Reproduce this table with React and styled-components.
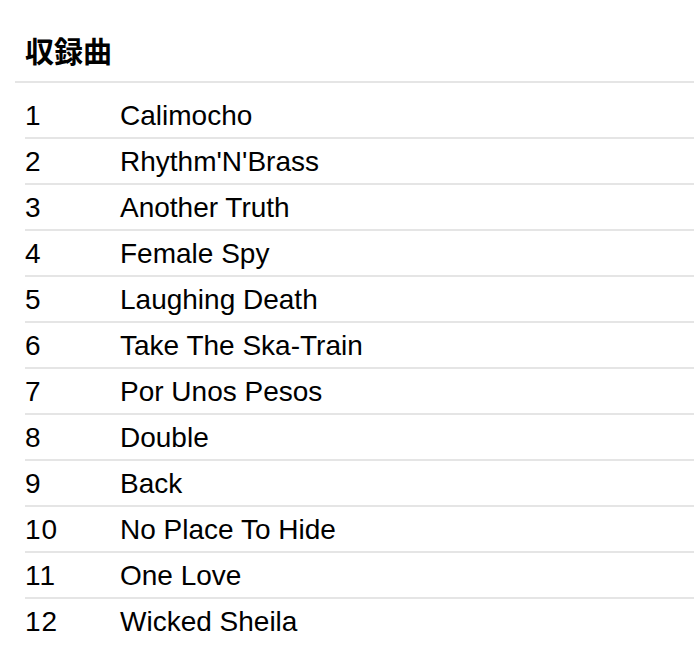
import React from "react";
import styled, { createGlobalStyle } from "styled-components";

const GlobalStyle = createGlobalStyle`
  html, body {
    margin: 0;
    padding: 0;
    background: #ffffff;
  }
  body {
    font-family: "Liberation Sans", "Noto Sans CJK JP", Arial, sans-serif;
    color: #000000;
  }
`;

const Section = styled.section`
  padding-left: 15px;
`;

const Heading = styled.h2`
  margin: 0;
  padding: 34px 0 15px 10px;
  font-size: 29px;
  line-height: 32px;
  font-weight: 700;
  font-family: "Noto Sans CJK JP", "Liberation Sans", sans-serif;
  border-bottom: 2px solid #e5e5e5;
`;

const TrackList = styled.ol`
  list-style: none;
  margin: 10px 0 0 10px;
  padding: 0;
`;

const TrackRow = styled.li`
  display: grid;
  grid-template-columns: 95px 1fr;
  padding: 7px 0 5px;
  font-size: 28px;
  line-height: 32px;
  border-bottom: 2px solid #e5e5e5;
  &:last-child {
    border-bottom: none;
  }
`;

const TrackNo = styled.span`
  letter-spacing: 1px;
`;
const TrackTitle = styled.span``;

const tracks = [
  "Calimocho",
  "Rhythm'N'Brass",
  "Another Truth",
  "Female Spy",
  "Laughing Death",
  "Take The Ska-Train",
  "Por Unos Pesos",
  "Double",
  "Back",
  "No Place To Hide",
  "One Love",
  "Wicked Sheila",
];

export default function App() {
  return (
    <>
      <GlobalStyle />
      <Section>
        <Heading>収録曲</Heading>
        <TrackList>
          {tracks.map((t, i) => (
            <TrackRow key={t}>
              <TrackNo>{i + 1}</TrackNo>
              <TrackTitle>{t}</TrackTitle>
            </TrackRow>
          ))}
        </TrackList>
      </Section>
    </>
  );
}
